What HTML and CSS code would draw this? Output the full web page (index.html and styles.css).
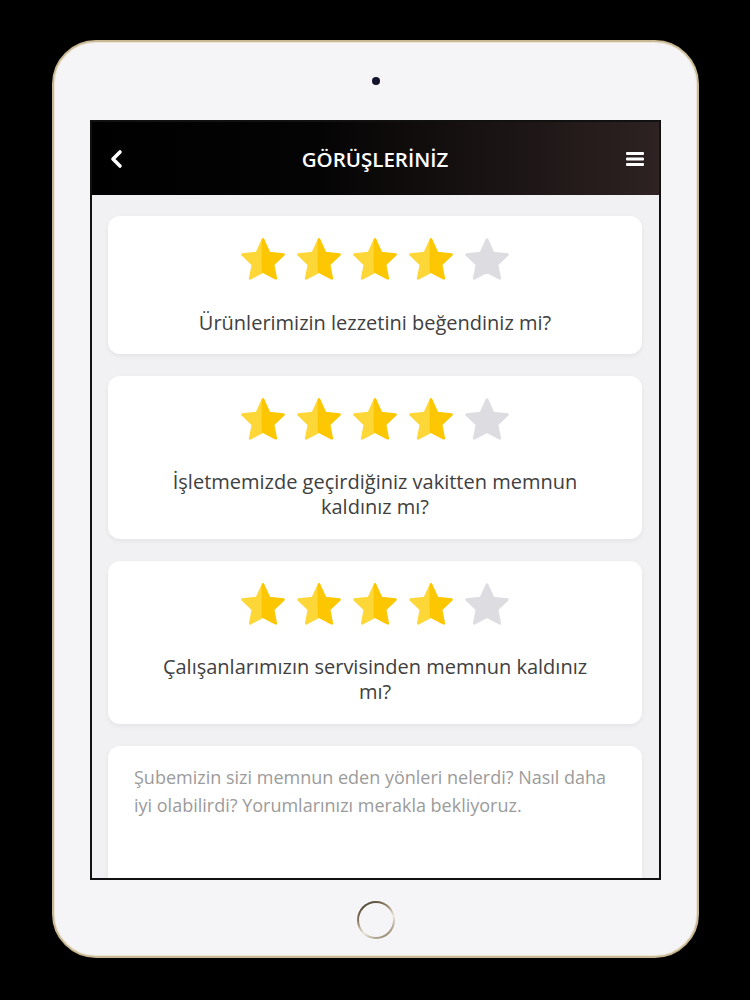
FILE: index.html
```html
<!DOCTYPE html>
<html lang="tr">
<head>
<meta charset="utf-8">
<title>Görüşleriniz</title>
<link rel="stylesheet" href="styles.css">
</head>
<body>
<svg class="defs" width="0" height="0" aria-hidden="true">
  <defs>
    <symbol id="star-on" viewBox="0 0 100 100">
      <polygon points="50,6 35.9,36.6 3.4,40 27.2,62.4 21,94 50,78.5" fill="#fdd638" stroke="#fdd638" stroke-width="6" stroke-linejoin="round"/>
      <polygon points="50,6 64.1,36.6 96.6,40 72.8,62.4 79,94 50,78.5" fill="#fcc600" stroke="#fcc600" stroke-width="6" stroke-linejoin="round"/>
    </symbol>
    <symbol id="star-off" viewBox="0 0 100 100">
      <polygon points="50,6 64.1,36.6 96.6,40 72.8,62.4 79,94 50,78.5 21,94 27.2,62.4 3.4,40 35.9,36.6" fill="#dddce1" stroke="#dddce1" stroke-width="6" stroke-linejoin="round"/>
    </symbol>
  </defs>
</svg>
<div class="tablet">
  <div class="camera"></div>
  <div class="screen">
    <header class="topbar">
      <svg class="back" viewBox="0 0 16 20"><polyline points="12,3 5,10 12,17" fill="none" stroke="#fff" stroke-width="3.6" stroke-linecap="round" stroke-linejoin="round"/></svg>
      <h1 class="title">GÖRÜŞLERİNİZ</h1>
      <svg class="menu" viewBox="0 0 18 16"><rect x="0" y="1" width="18" height="3" rx="1" fill="#fff"/><rect x="0" y="6.5" width="18" height="3" rx="1" fill="#fff"/><rect x="0" y="12" width="18" height="3" rx="1" fill="#fff"/></svg>
    </header>
    <main class="content">
      <section class="card">
        <div class="stars">
          <svg class="star"><use href="#star-on"/></svg>
          <svg class="star"><use href="#star-on"/></svg>
          <svg class="star"><use href="#star-on"/></svg>
          <svg class="star"><use href="#star-on"/></svg>
          <svg class="star"><use href="#star-off"/></svg>
        </div>
        <p class="question">Ürünlerimizin lezzetini beğendiniz mi?</p>
      </section>
      <section class="card">
        <div class="stars">
          <svg class="star"><use href="#star-on"/></svg>
          <svg class="star"><use href="#star-on"/></svg>
          <svg class="star"><use href="#star-on"/></svg>
          <svg class="star"><use href="#star-on"/></svg>
          <svg class="star"><use href="#star-off"/></svg>
        </div>
        <p class="question"><span class="line">İşletmemizde geçirdiğiniz vakitten memnun</span><span class="line">kaldınız mı?</span></p>
      </section>
      <section class="card">
        <div class="stars">
          <svg class="star"><use href="#star-on"/></svg>
          <svg class="star"><use href="#star-on"/></svg>
          <svg class="star"><use href="#star-on"/></svg>
          <svg class="star"><use href="#star-on"/></svg>
          <svg class="star"><use href="#star-off"/></svg>
        </div>
        <p class="question"><span class="line">Çalışanlarımızın servisinden memnun kaldınız</span><span class="line">mı?</span></p>
      </section>
      <section class="card comment">
        <p class="placeholder">Şubemizin sizi memnun eden yönleri nelerdi? Nasıl daha<br>iyi olabilirdi? Yorumlarınızı merakla bekliyoruz.</p>
      </section>
    </main>
  </div>
  <div class="home"><div class="home-inner"></div></div>
</div>
</body>
</html>
```

FILE: styles.css
```css
html, body {
  margin: 0;
  padding: 0;
  background: #000;
}
body {
  width: 750px;
  height: 1000px;
  overflow: hidden;
  font-family: "Open Sans", "Liberation Sans", sans-serif;
}
.defs {
  position: absolute;
  width: 0;
  height: 0;
}
.tablet {
  box-sizing: border-box;
  margin: 40px 0 0 52px;
  width: 647px;
  height: 918px;
  border-radius: 44px;
  background: #f5f5f7;
  border: 2px solid #c8b894;
  box-shadow: inset 0 0 0 1px #ece6d8;
  display: flex;
  flex-direction: column;
  align-items: center;
  padding-top: 35px;
}
.camera {
  width: 8px;
  height: 8px;
  border-radius: 50%;
  background: #14142a;
}
.screen {
  box-sizing: border-box;
  margin-top: 35px;
  width: 571px;
  height: 760px;
  border: 2px solid #111;
  display: flex;
  flex-direction: column;
  overflow: hidden;
  background: #f1f1f3;
}
.topbar {
  flex: none;
  height: 73px;
  display: flex;
  align-items: center;
  padding: 0 15px 0 16px;
  background: linear-gradient(90deg, #000 0%, #050404 40%, #2e2222 100%);
}
.back {
  width: 16px;
  height: 20px;
}
.menu {
  width: 18px;
  height: 16px;
}
.title {
  flex: 1;
  margin: 0;
  text-align: center;
  color: #fff;
  font-size: 20.5px;
  font-weight: 600;
  letter-spacing: 0;
}
.content {
  flex: 1;
  padding: 21px 17px 0 16px;
  display: flex;
  flex-direction: column;
  gap: 22px;
}
.card {
  flex: none;
  background: #fff;
  border-radius: 12px;
  box-shadow: 0 2px 5px rgba(0, 0, 0, 0.06);
  padding: 21px 20px 19px;
  display: flex;
  flex-direction: column;
  align-items: center;
}
.stars {
  display: flex;
  gap: 12px;
  height: 44px;
}
.star {
  width: 44px;
  height: 44px;
}
.question {
  margin: 29px 0 0;
  text-align: center;
  font-size: 20px;
  line-height: 25px;
  color: #404040;
  display: flex;
  flex-direction: column;
  align-items: center;
}
.line {
  display: block;
  height: 25px;
  line-height: 24px;
}
.comment {
  align-items: flex-start;
  padding: 17px 26px 60px;
  min-height: 120px;
}
.placeholder {
  margin: 0;
  font-size: 18px;
  line-height: 28px;
  color: #9b9b9b;
}
.home {
  margin-top: 21px;
  width: 38px;
  height: 38px;
  border-radius: 50%;
  padding: 2px;
  box-sizing: border-box;
  background: linear-gradient(150deg, #2f261c 0%, #8c7c62 35%, #efe8da 60%, #6d5d44 100%);
}
.home-inner {
  width: 100%;
  height: 100%;
  border-radius: 50%;
  background: #f5f5f7;
}
```
